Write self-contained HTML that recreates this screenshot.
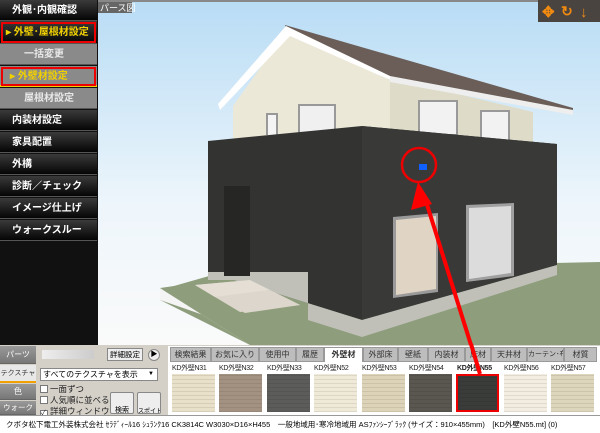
<!DOCTYPE html>
<html><head><meta charset="utf-8"><style>
*{margin:0;padding:0;box-sizing:border-box}
body{width:600px;height:433px;overflow:hidden;position:relative;background:#d4d0c8;font-family:"Liberation Sans","Noto Sans CJK JP",sans-serif;font-size:10px}
.side{position:absolute;left:0;top:0;width:98px;height:345px;background:#111}
.it{position:absolute;left:0;width:97px;height:21px;background:linear-gradient(#3a3a3a,#050505);color:#fff;font-size:10px;font-weight:bold;line-height:21px;padding-left:12px;border-bottom:1px solid #555;white-space:nowrap}
.sub{background:#8a8a8a;color:#e8e8e8;padding-left:24px}
.y{color:#f0d000}
.tab{position:absolute;top:347px;height:15px;background:#bdbdbd;border:1px solid #999;font-size:8px;color:#333;text-align:center;line-height:13px;white-space:nowrap;overflow:hidden}
.lbl{position:absolute;top:363px;font-size:7px;color:#222;white-space:nowrap;letter-spacing:-0.3px}
.th{position:absolute;top:374px;width:43px;height:38px;background-image:repeating-linear-gradient(0deg,rgba(0,0,0,.08) 0 1px,transparent 1px 4px)}
.lt{position:absolute;left:0;width:36px;background:linear-gradient(#999,#777);color:#fff;font-size:8px;text-align:center;border-bottom:1px solid #666;white-space:nowrap;overflow:hidden}
.cb{position:absolute;left:40px;font-size:8.5px;color:#222;white-space:nowrap}
.cb i{display:inline-block;width:8px;height:8px;border:1px solid #777;background:#fff;margin-right:2px;vertical-align:-1px;font-style:normal;font-size:7px;line-height:6px}
</style></head><body>
<svg style="position:absolute;left:98px;top:0" width="502" height="345" viewBox="98 0 502 345">
<defs><linearGradient id="sky" x1="0" y1="0" x2="0" y2="1"><stop offset="0" stop-color="#b8dcf5"/><stop offset=".6" stop-color="#eef6fb"/><stop offset="1" stop-color="#fafafa"/></linearGradient></defs>
<rect x="98" y="0" width="502" height="345" fill="url(#sky)"/>
<rect x="98" y="0" width="502" height="2" fill="#888"/>
<polygon points="160,290 230,270 600,262 600,345 250,345 160,300" fill="#8e9e7c"/>
<polygon points="160,288 250,345 290,345 160,300" fill="#f4f4f4"/>
<polygon points="160,288 195,283 300,345 250,345" fill="#8e9e7c"/>
<polygon points="195,285 250,280 300,305 240,312" fill="#ddd6cc"/>
<polygon points="233,106 285,33 390,78 533,112 533,145 233,145" fill="#ece8d8"/>
<polygon points="390,78 533,112 533,145 390,145" fill="#dedbc9"/>
<polygon points="285,25 573,108 573,113 390,80 287,32" fill="#6b5e58"/>
<polygon points="286,26 218,104 220,110 290,36 390,80 390,76" fill="#fff"/>
<polygon points="390,76 573,110 573,115 390,82" fill="#eee"/>
<rect x="266" y="113" width="12" height="22" fill="#999"/><rect x="268" y="115" width="8" height="20" fill="#f4f4f4"/>
<rect x="298" y="104" width="38" height="30" fill="#999"/><rect x="300" y="106" width="34" height="28" fill="#f0f0f0"/>
<rect x="418" y="100" width="40" height="36" fill="#999"/><rect x="420" y="102" width="36" height="32" fill="#f2f2f2"/>
<rect x="480" y="110" width="30" height="32" fill="#999"/><rect x="482" y="112" width="26" height="30" fill="#f2f2f2"/>
<polygon points="208,141 362,126 557,144 557,265 362,320 208,272" fill="#333432"/>
<polygon points="362,126 557,144 557,265 362,320" fill="#393a38"/>
<polygon points="208,272 362,320 557,265 557,275 362,337 308,320 308,276 208,276" fill="#c0c0b8"/>
<rect x="208" y="272" width="100" height="8" fill="#c0c0b8"/>
<rect x="224" y="186" width="26" height="90" fill="#262624"/>
<polygon points="393,217 438,213 438,292 393,298" fill="#9a9a9a"/><polygon points="396,220 436,216 436,289 396,295" fill="#e0d4c4"/>
<polygon points="466,205 514,203 514,276 466,282" fill="#a0a0a0"/><polygon points="469,208 511,206 511,273 469,279" fill="#dcdcdc"/>
<polygon points="195,285 250,280 270,290 215,297" fill="#e4ded4"/>
<polygon points="215,297 270,290 300,305 245,313" fill="#ddd6cc"/>
<rect x="538" y="0" width="62" height="22" fill="#4a4440"/>
<text x="542" y="17" fill="#f08a10" font-size="15" font-weight="bold">✥</text>
<text x="561" y="16" fill="#f08a10" font-size="14" font-weight="bold">↻</text>
<text x="580" y="17" fill="#f08a10" font-size="15" font-weight="bold">↓</text>
<rect x="98" y="2" width="34" height="11" fill="#666"/>
<text x="100" y="11" fill="#fff" font-size="9" font-family="Liberation Sans,Noto Sans CJK JP,sans-serif">パース図</text>
<circle cx="419" cy="165" r="17" fill="none" stroke="#e00" stroke-width="2.5"/>
<rect x="419" y="164" width="8" height="6" fill="#1060ff"/>
<line x1="471" y1="345" x2="424" y2="195" stroke="#f00" stroke-width="4"/>
<polygon points="418,182 411,210 432,204" fill="#f00"/>
</svg>
<div class="side">
<div class="it" style="top:0">外観･内観確認</div>
<div class="it y" style="top:21px;height:23px;line-height:23px;padding-left:6px;outline:2px solid #e00;outline-offset:-3px">▸ 外壁･屋根材設定</div>
<div class="it sub" style="top:44px">一括変更</div>
<div class="it sub y" style="top:66px;padding-left:10px;outline:2px solid #e00;outline-offset:-3px;border-bottom:2px solid #f0d000">▸ 外壁材設定</div>
<div class="it sub" style="top:88px">屋根材設定</div>
<div class="it" style="top:110px">内装材設定</div>
<div class="it" style="top:132px">家具配置</div>
<div class="it" style="top:154px">外構</div>
<div class="it" style="top:176px">診断／チェック</div>
<div class="it" style="top:198px">イメージ仕上げ</div>
<div class="it" style="top:220px">ウォークスルー</div>
</div>
<div style="position:absolute;left:0;top:345px;width:600px;height:70px;background:#d4d0c8"></div>
<div class="lt" style="top:346px;height:18px;line-height:18px">パーツ</div>
<div class="lt" style="top:365px;height:18px;line-height:18px;background:#e8e8e8;color:#333;border-bottom:2px solid #f0a000;font-size:7px">テクスチャ</div>
<div class="lt" style="top:384px;height:16px;line-height:16px">色</div>
<div class="lt" style="top:401px;height:14px;line-height:14px;font-size:7.5px">ウォーク</div>
<div style="position:absolute;left:42px;top:350px;width:52px;height:9px;background:linear-gradient(90deg,#eee,#ccc)"></div>
<div style="position:absolute;left:107px;top:348px;width:36px;height:13px;border:1px solid #888;background:#eee;font-size:7.5px;text-align:center;line-height:11px">詳細設定</div>
<div style="position:absolute;left:148px;top:349px;width:12px;height:12px;border-radius:6px;background:#eee;border:1px solid #888;font-size:7px;text-align:center;line-height:10px">▶</div>
<div style="position:absolute;left:40px;top:368px;width:118px;height:13px;background:#fff;border:1px solid #888;font-size:8px;line-height:11px;padding-left:2px;white-space:nowrap">すべてのテクスチャを表示<span style="position:absolute;right:3px;font-size:6px">▼</span></div>
<div class="cb" style="top:383px"><i></i>一面ずつ</div>
<div class="cb" style="top:394px"><i></i>人気順に並べる</div>
<div class="cb" style="top:405px"><i>✓</i>詳細ウィンドウ</div>
<div style="position:absolute;left:110px;top:392px;width:24px;height:22px;border:1px solid #888;background:#eee;font-size:7px;text-align:center;padding-top:12px;border-radius:2px">検索</div>
<div style="position:absolute;left:137px;top:392px;width:24px;height:22px;border:1px solid #888;background:#eee;font-size:6px;text-align:center;padding-top:13px;border-radius:2px;white-space:nowrap;overflow:hidden">スポイト</div>
<div style="position:absolute;left:168px;top:346px;width:432px;height:69px;background:#fff"></div>
<div class="tab" style="left:170px;width:41px">検索結果</div>
<div class="tab" style="left:211px;width:48px">お気に入り</div>
<div class="tab" style="left:259px;width:37px">使用中</div>
<div class="tab" style="left:296px;width:28px">履歴</div>
<div class="tab" style="left:324px;width:39px;background:#fff;font-weight:bold;border-bottom:none">外壁材</div>
<div class="tab" style="left:363px;width:35px">外部床</div>
<div class="tab" style="left:398px;width:30px">壁紙</div>
<div class="tab" style="left:428px;width:37px">内装材</div>
<div class="tab" style="left:465px;width:26px">床材</div>
<div class="tab" style="left:491px;width:36px">天井材</div>
<div class="tab" style="left:527px;width:37px;font-size:7px">カーテン･布</div>
<div class="tab" style="left:564px;width:33px">材質</div>
<div class="lbl" style="left:172px">KD外壁N31</div><div class="th" style="left:172px;background-color:#e8e0c8"></div>
<div class="lbl" style="left:219px">KD外壁N32</div><div class="th" style="left:219px;background-color:#a39282"></div>
<div class="lbl" style="left:267px">KD外壁N33</div><div class="th" style="left:267px;background-color:#5c5c5a"></div>
<div class="lbl" style="left:314px">KD外壁N52</div><div class="th" style="left:314px;background-color:#efe9d8"></div>
<div class="lbl" style="left:362px">KD外壁N53</div><div class="th" style="left:362px;background-color:#ddd3b8"></div>
<div class="lbl" style="left:409px">KD外壁N54</div><div class="th" style="left:409px;background-color:#5a5650"></div>
<div class="lbl" style="left:457px;font-weight:bold">KD外壁N55</div><div class="th" style="left:456px;width:43px;background-color:#3a3c3a;border:2px solid #e00"></div>
<div class="lbl" style="left:504px">KD外壁N56</div><div class="th" style="left:504px;background-color:#f2ede0"></div>
<div class="lbl" style="left:551px">KD外壁N57</div><div class="th" style="left:551px;background-color:#ddd6bc"></div>
<svg style="position:absolute;left:0;top:0" width="600" height="433"><line x1="471" y1="344" x2="480" y2="374" stroke="#f00" stroke-width="4"/></svg>
<div style="position:absolute;left:0;top:415px;width:600px;height:18px;background:#fff;border-top:1px solid #999;font-size:7.5px;line-height:17px;padding-left:6px;white-space:nowrap;overflow:hidden">クボタ松下電工外装株式会社 ｾﾗﾃﾞｨｰﾙ16 ｼｭﾗﾝｸ16 CK3814C W3030×D16×H455　一般地域用･寒冷地域用 ASﾌｧﾝｼｰﾌﾞﾗｯｸ (サイズ：910×455mm)　[KD外壁N55.mt] (0)</div>
</body></html>
